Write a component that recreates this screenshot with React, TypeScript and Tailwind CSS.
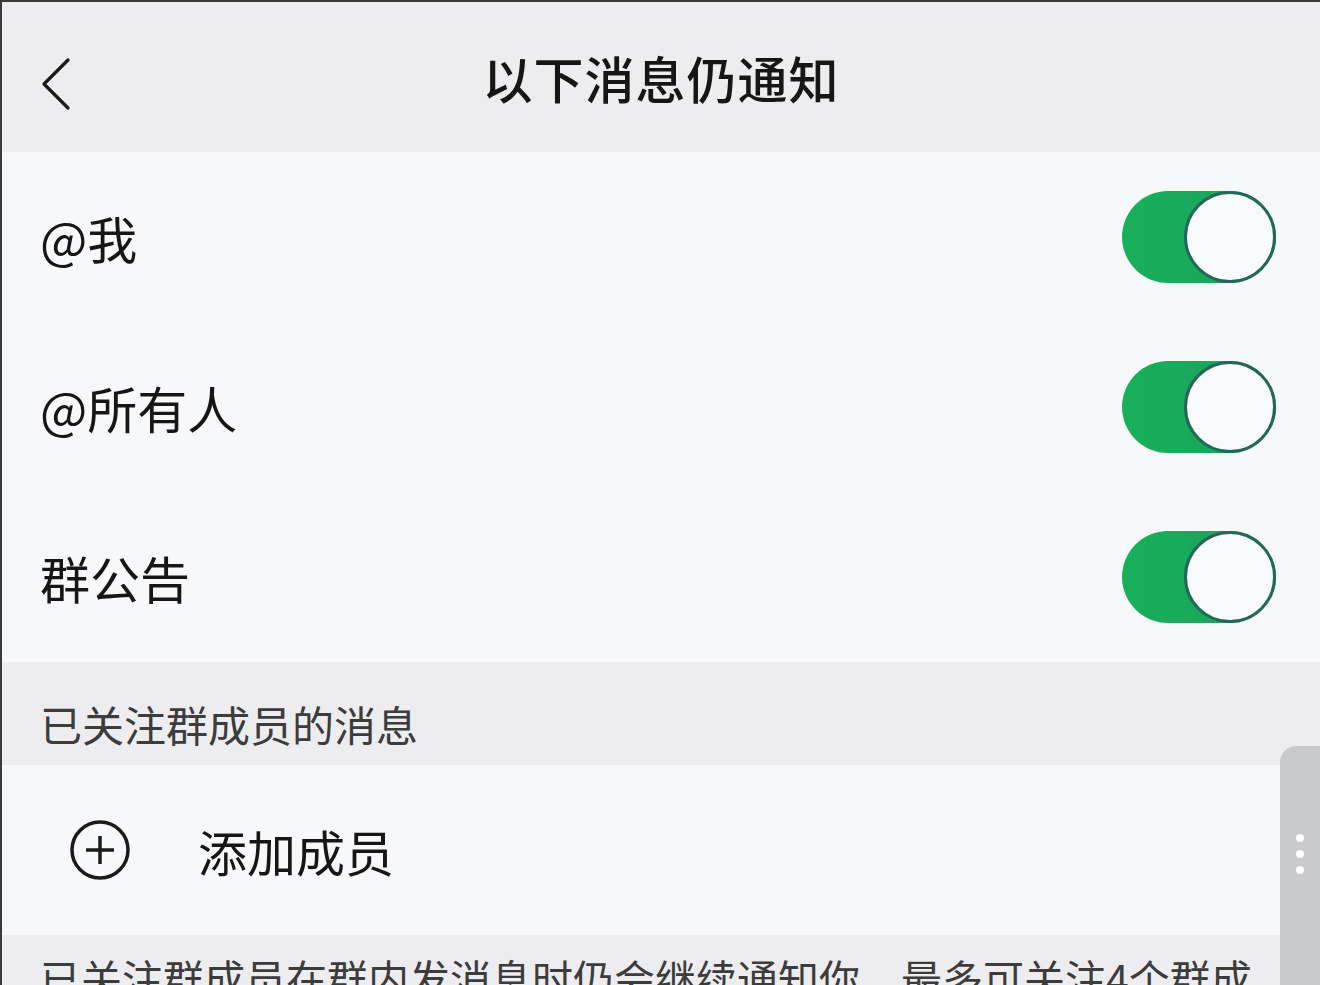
const rows = ['@我', '@所有人', '群公告']

const Toggle = () => (
  <div className="flex h-[92px] w-[154px] items-center justify-end rounded-full bg-gradient-to-r from-[#18b05a] to-[#1ba05c]">
    <div className="h-[92px] w-[92px] rounded-full border-[3px] border-[#22675a] bg-[#f8f9fb]" />
  </div>
)

export default function App() {
  return (
    <div
      className="relative h-[985px] w-[1320px] overflow-hidden border-l-2 border-t-2 border-[#3a3a3a] bg-[#ededf0] text-[#161616]"
      style={{ fontFamily: '"Noto Sans CJK SC", "Noto Sans", sans-serif' }}
    >
      {/* 顶栏 */}
      <header className="relative flex h-[150px] items-center justify-center">
        <svg
          width="40"
          height="56"
          viewBox="0 0 40 56"
          fill="none"
          stroke="#1a1a1a"
          strokeWidth="3.2"
          strokeLinecap="round"
          strokeLinejoin="round"
          className="absolute left-[34px] top-[54px]"
        >
          <path d="M32 4 L8 28 L32 52" />
        </svg>
        <h1 className="text-[50px] font-medium tracking-[1px]">以下消息仍通知</h1>
      </header>

      {/* 开关列表 */}
      <section className="bg-[#f7f8fa]">
        {rows.map((label) => (
          <div key={label} className="flex h-[170px] items-center justify-between pl-[38px] pr-[44px]">
            <span className="text-[50px] leading-none">{label}</span>
            <Toggle />
          </div>
        ))}
      </section>

      <div className="flex h-[103px] items-center pl-[38px] pt-[20px]">
        <span className="text-[42px] leading-none text-[#3c3c3c]">已关注群成员的消息</span>
      </div>

      <section className="flex h-[170px] items-center bg-[#f7f8fa] pl-[66px]">
        <svg width="64" height="64" viewBox="0 0 64 64" fill="none" stroke="#1a1a1a" strokeWidth="3.5">
          <circle cx="32" cy="32" r="28" />
          <path d="M32 18v28M18 32h28" />
        </svg>
        <span className="ml-[66px] text-[49px] leading-none">添加成员</span>
      </section>

      <p className="px-[38px] pt-[12px] text-[41px] leading-[60px] text-[#3c3c3c]">
        已关注群成员在群内发消息时仍会继续通知你，最多可关注4个群成员。
      </p>

      {/* 侧边悬浮条 */}
      <div className="absolute right-0 top-[744px] flex h-[260px] w-[40px] flex-col items-center gap-[8px] rounded-tl-[16px] bg-[#c9cacd] pt-[88px]">
        <span className="h-[8px] w-[8px] rounded-full bg-white" />
        <span className="h-[8px] w-[8px] rounded-full bg-white" />
        <span className="h-[8px] w-[8px] rounded-full bg-white" />
      </div>
    </div>
  )
}
